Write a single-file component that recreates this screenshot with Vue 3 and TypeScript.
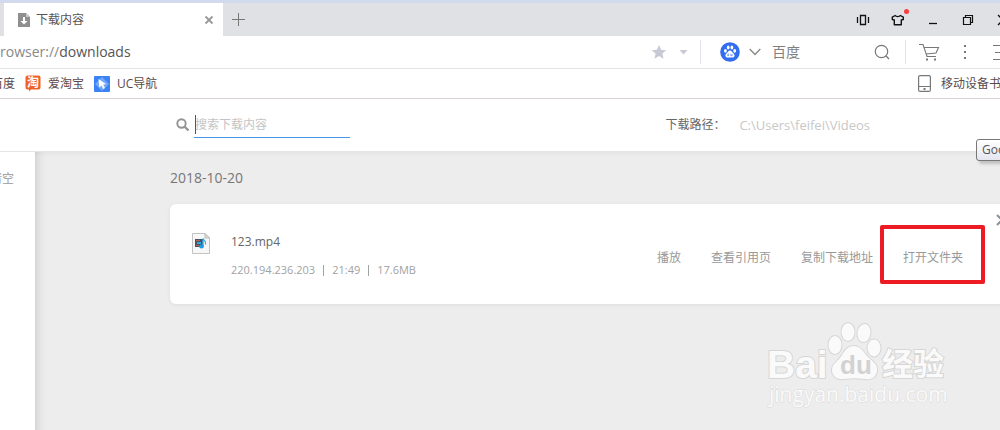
<script setup lang="ts">
import { ref } from 'vue'

interface DownloadItem {
  name: string
  host: string
  time: string
  size: string
}

const query = ref('')
const engineQuery = ref('')
const actions: string[] = ['播放', '查看引用页', '复制下载地址', '打开文件夹']
const highlighted = '打开文件夹'
const downloads: DownloadItem[] = [
  { name: '123.mp4', host: '220.194.236.203', time: '21:49', size: '17.6MB' },
]
</script>

<template>
  <div class="browser">
    <div class="tabbar">
      <div class="tab">
        <svg width="12" height="14" viewBox="0 0 12 14"><path d="M0 0H8L12 4V14H0Z" fill="#8f8f8f" /><path d="M8 0V4H12Z" fill="#c9c9c9" /><path d="M5 4H7V8H9.500L6 11.500L2.500 8H5Z" fill="#fff" /></svg>
        <span class="tab-title">下载内容</span>
        <button class="plain" aria-label="关闭标签页">
          <svg width="10" height="10" viewBox="0 0 10 10"><path d="M1.500 1.500L8.500 8.500M8.500 1.500L1.500 8.500" stroke="#999" stroke-width="1.800" /></svg>
        </button>
      </div>
      <button class="plain new-tab" aria-label="新建标签页">
        <svg width="14" height="14" viewBox="0 0 14 14"><path d="M0 6.500H13M6.500 0V13" stroke="#777" /></svg>
      </button>
      <div class="window-buttons">
        <button class="plain" aria-label="侧栏">
          <svg width="14" height="12" viewBox="0 0 14 12"><path d="M4.500 1.500H9.500V10.500H4.500ZM1.500 3V9M12.500 3V9" fill="none" stroke="#111" stroke-width="1.300" /></svg>
        </button>
        <button class="plain skin" aria-label="皮肤">
          <svg width="14" height="12" viewBox="0 0 14 12"><path d="M4.200 1.500C5 3 8.500 3 9.300 1.500L12.300 3.200V5.500L10.300 6V10.700H3.300V6L1.300 5.500V3.200Z" fill="none" stroke="#111" stroke-width="1.400" stroke-linejoin="round" /></svg>
          <i class="dot"></i>
        </button>
        <button class="plain" aria-label="最小化">
          <svg width="12" height="12" viewBox="0 0 12 12"><path d="M2 9.500H10" stroke="#111" stroke-width="1.300" /></svg>
        </button>
        <button class="plain" aria-label="还原">
          <svg width="12" height="12" viewBox="0 0 12 12"><path d="M1.500 3.500H8.500V10.500H1.500ZM3.500 3.500V1.500H10.500V8.500H8.500" fill="none" stroke="#111" stroke-width="1.200" /></svg>
        </button>
        <button class="plain" aria-label="关闭">
          <svg width="12" height="12" viewBox="0 0 12 12"><path d="M1 1L11 11M11 1L1 11" stroke="#111" stroke-width="1.300" /></svg>
        </button>
      </div>
    </div>

    <div class="address">
      <div class="url" role="textbox" aria-label="地址" contenteditable="true"><span class="scheme">rowser://</span>downloads</div>
      <div class="tools">
        <button class="plain" aria-label="收藏">
          <svg width="16" height="16" viewBox="0 0 16 16"><path d="M8 1L10.100 5.700L15.300 6.200L11.400 9.600L12.500 14.700L8 12L3.500 14.700L4.600 9.600L0.700 6.200L5.900 5.700Z" fill="#c7cad5" /></svg>
        </button>
        <button class="plain caret-button" aria-label="收藏选项">
          <svg width="9" height="5" viewBox="0 0 9 5"><path d="M0.500 0H8.500L4.500 4.500Z" fill="#c7cad5" /></svg>
        </button>
        <i class="divider"></i>
        <button class="plain engine-logo" aria-label="搜索引擎">
          <svg width="20" height="20" viewBox="0 0 20 20"><circle cx="10" cy="10" r="9.800" fill="#326df0" /><g fill="#fff"><ellipse cx="5.400" cy="8.800" rx="1.400" ry="1.900" /><ellipse cx="8.200" cy="5.400" rx="1.400" ry="2" /><ellipse cx="11.900" cy="5.400" rx="1.400" ry="2" /><ellipse cx="14.700" cy="8.800" rx="1.400" ry="1.900" /><path d="M10 8.500C11.500 8.500 12.200 10.200 13.600 11.500C15.800 13.700 14 16 11.500 15.400H8.500C6 16 4.200 13.700 6.400 11.500C7.800 10.200 8.500 8.500 10 8.500Z" /></g><path d="M8.600 11.500V13.700H7.600V12.500M10.800 12V13.700H12.200V12" fill="none" stroke="#326df0" stroke-width=".6" /></svg>
        </button>
        <button class="plain chevron-button" aria-label="切换搜索引擎">
          <svg width="12" height="8" viewBox="0 0 12 8"><path d="M0.700 1L6 6.500L11.300 1" fill="none" stroke="#888" stroke-width="1.300" /></svg>
        </button>
        <input v-model="engineQuery" class="engine-input" type="text" placeholder="百度" aria-label="百度" />
        <button class="plain" aria-label="搜索">
          <svg width="16" height="16" viewBox="0 0 16 16"><circle cx="7.500" cy="7.500" r="6.200" fill="none" stroke="#777" stroke-width="1.200" /><path d="M11.800 11.800L15 15" stroke="#777" stroke-width="1.300" /></svg>
        </button>
        <i class="divider second"></i>
        <button class="plain cart" aria-label="购物车">
          <svg width="21" height="18" viewBox="0 0 21 18"><path d="M0 1.500H4L8 13.500H17M5 4.500H19.500L17 10L7 11" fill="none" stroke="#777" stroke-width="1.100" /><path d="M7 15.500H9V17.500H7ZM15 15.500H17V17.500H15Z" fill="#777" /></svg>
        </button>
        <button class="plain more" aria-label="更多">
          <svg width="4" height="16" viewBox="0 0 4 16"><path d="M1 1H3V3H1ZM1 7H3V9H1ZM1 13H3V15H1Z" fill="#777" /></svg>
        </button>
        <button class="plain menu" aria-label="菜单">
          <svg width="16" height="16" viewBox="0 0 16 16"><path d="M0 1.500H16M2 8.500H16M0 15.500H16" stroke="#777" stroke-width="1.100" /></svg>
        </button>
      </div>
    </div>

    <nav class="bookmarks">
      <a class="first" href="#">百度</a>
      <a href="#">
        <svg width="16" height="17" viewBox="0 0 16 17"><path d="M2.500 0.500H13.500Q15.500 0.500 15.500 2.500V12.500Q15.500 14.500 13.500 14.500H6L4 16.500V14.500H2.500Q0.500 14.500 0.500 12.500V2.500Q0.500 0.500 2.500 0.500Z" fill="#ee622a" /><text x="2" y="12" font-size="12" font-weight="700" fill="#fff">淘</text></svg>
        爱淘宝
      </a>
      <a href="#">
        <svg width="16" height="16" viewBox="0 0 16 16"><rect width="16" height="16" rx="1" fill="#3b83f4" /><path d="M8 1L15 8L8 15L1 8Z" fill="#72a8fa" /><path d="M4.500 3L12 8L9.200 8.700L11 12L9.200 13L7.500 9.600L5.300 11.500Z" fill="#fff" /></svg>
        UC导航
      </a>
      <a class="mobile" href="#">
        <svg width="13" height="17" viewBox="0 0 13 17"><rect x=".6" y=".6" width="11.800" height="15.800" rx="1.500" fill="none" stroke="#777" stroke-width="1.200" /><path d="M1 11.500H12" stroke="#777" /><path d="M5.500 13H7.500V15H5.500Z" fill="#777" /></svg>
        移动设备书签
      </a>
    </nav>

    <header class="page-head">
      <label class="search">
        <svg width="14" height="14" viewBox="0 0 14 14"><circle cx="5.500" cy="5.500" r="4.200" fill="none" stroke="#929292" stroke-width="1.900" /><path d="M8.700 8.700L12.500 12.500" stroke="#929292" stroke-width="2.300" /></svg>
        <span class="field"><input v-model="query" type="text" placeholder="搜索下载内容" aria-label="搜索下载内容" /></span>
      </label>
      <div class="path"><span>下载路径：</span><span class="dir">C:\Users\feifei\Videos</span></div>
      <div class="tooltip" role="tooltip">Goo</div>
    </header>

    <div class="body">
      <aside><button class="plain clear">清空</button></aside>
      <main>
        <h2>2018-10-20</h2>
        <article v-for="item in downloads" :key="item.name" class="card">
          <svg class="file" width="18" height="21" viewBox="0 0 18 21"><path d="M.5 .5H13L17.500 5V20.500H.5Z" fill="#f7f7f7" stroke="#c3c3c3" /><path d="M13 .5V5H17.500Z" fill="#ddd" stroke="#bbb" /><rect x="3" y="6" width="8" height="8" fill="#465564" /><path d="M4 7H8V8H4ZM4 12H7V13H4Z" fill="#b5605e" /><path d="M5 9H9V11H5Z" fill="#38a5dc" /><path d="M11 13V5.500C12 7.500 14.500 8 13.500 11.500" fill="none" stroke="#35a9ec" stroke-width="1.300" /><ellipse cx="9.500" cy="13.500" rx="2.400" ry="1.900" fill="#199bea" /></svg>
          <div class="info">
            <div class="name">{{ item.name }}</div>
            <div class="meta"><span>{{ item.host }}</span><i></i><span>{{ item.time }}</span><i></i><span>{{ item.size }}</span></div>
          </div>
          <div class="actions">
            <button v-for="action in actions" :key="action" class="plain" :class="{ marked: action === highlighted }">{{ action }}</button>
          </div>
          <button class="plain remove" aria-label="删除">
            <svg width="12" height="12" viewBox="0 0 12 12"><path d="M1 1L11 11M11 1L1 11" stroke="#8b929b" stroke-width="2" /></svg>
          </button>
        </article>
        <svg class="watermark" width="190" height="95" viewBox="0 0 190 95" role="img" aria-label="Baidu 经验">
          <g fill="#fafafa" stroke="#d6d6d6" stroke-width="2" paint-order="stroke">
            <text x="4" y="63" class="wm-latin">Bai</text>
            <ellipse cx="72" cy="30" rx="6.500" ry="9" />
            <ellipse cx="85" cy="17" rx="6.500" ry="9" />
            <ellipse cx="101" cy="18" rx="6.500" ry="9" transform="rotate(8 101 18)" />
            <ellipse cx="111" cy="33" rx="6.500" ry="8.500" />
            <path d="M91 31C97 31 101 37 104 41C108 46 115 48 114 56C113 63 108 65 102 64C95 63 88 63 81 64C74 65 69 61 69 55C69 48 76 46 79 40C82 35 85 31 91 31Z" />
            <text x="119" y="60" class="wm-cjk">经验</text>
          </g>
          <text x="77" y="59" class="wm-du">du</text>
          <text x="6" y="87" class="wm-url">jingyan.baidu.com</text>
        </svg>
      </main>
    </div>
  </div>
</template>

<style>
html, body, #app { height: 100%; }
body { margin: 0; }
</style>

<style scoped>
* { box-sizing: border-box; }
.browser { min-height: 100%; display: flex; flex-direction: column; overflow: hidden; background: #fff; color: #5b5252; font: 12px/18px "Open Sans", "Noto Sans CJK SC", sans-serif; border-top: 3px solid #d2daee; }
svg { display: block; flex: none; }
.plain { border: 0; padding: 0; background: none; color: inherit; font: inherit; display: flex; align-items: center; justify-content: center; flex: none; white-space: nowrap; position: relative; }
.tabbar { height: 33px; display: flex; align-items: center; background: #e0e1e5; padding-left: 4px; }
.tab { width: 219px; height: 33px; background: #fff; display: flex; align-items: center; padding: 0 9px 0 14px; }
.tab-title { flex: 1; margin-left: 6px; }
.new-tab { margin-left: 9px; }
.window-buttons { display: flex; margin-left: auto; margin-right: -20px; }
.window-buttons .plain { width: 35px; height: 33px; }
.dot { position: absolute; top: 6px; right: 6px; width: 5px; height: 5px; border-radius: 50%; background: #fc3c3c; }
.address { height: 33px; display: flex; align-items: center; border-bottom: 1px solid #e4e4e8; }
.url { flex: 1; font-size: 14px; line-height: 20px; color: #555; outline: none; white-space: nowrap; }
.scheme { color: #888; }
.tools { display: flex; align-items: center; margin-right: -9px; }
.divider { width: 1px; height: 24px; background: #e2e3ea; margin: 0 19px 0 12px; }
.divider.second { margin: 0 13px 0 15px; }
.caret-button { margin-left: 12px; }
.chevron-button { margin-left: 9px; }
.engine-input { width: 113px; height: 22px; padding: 0 0 2px 11px; border: 0; outline: none; background: none; font: 14px/20px "Open Sans", "Noto Sans CJK SC", sans-serif; }
.engine-input::placeholder { color: #808080; opacity: 1; }
.more { margin-left: 23px; }
.menu { margin-left: 26px; }
.bookmarks { height: 30px; display: flex; align-items: center; gap: 10px; border-bottom: 1px solid #dbd2d5; white-space: nowrap; }
.bookmarks a { display: flex; align-items: center; gap: 7px; color: #5b4a4a; text-decoration: none; }
.bookmarks .first { margin-left: -9px; }
.bookmarks .mobile { margin-left: auto; margin-right: -13px; gap: 10px; }
.page-head { position: relative; height: 53px; display: flex; align-items: center; justify-content: space-between; padding: 0 130px 0 176px; border-bottom: 1px solid #e6e6e6; }
.search { display: flex; align-items: center; gap: 4px; }
.field { position: relative; border-bottom: 1px solid #4a98ee; }
.field::before { content: ""; position: absolute; left: 1px; top: 3px; width: 1px; height: 19px; background: #555; }
.search input { display: block; width: 156px; height: 25px; padding: 0 0 0 1px; border: 0; outline: none; background: none; font: inherit; }
.search input::placeholder { color: #c4c4c4; opacity: 1; }
.path { display: flex; gap: 14px; color: #666; }
.dir { color: #c8c8c8; font-size: 13px; }
.tooltip { position: absolute; z-index: 2; top: 40px; right: -6px; width: 30px; height: 22px; padding: 1px 5px; border: 1px solid #777; border-radius: 3px; background: linear-gradient(#fff, #e5e5f1); box-shadow: 3px 3px 3px #9998; color: #555; }
.body { flex: 1; display: flex; }
aside { width: 35px; background: #fff; padding-top: 18px; }
.clear { margin-left: -10px; color: #999; }
main { position: relative; flex: 1; padding: 16px 0 126px 135px; background: #ededed; box-shadow: inset 12px 0 12px -12px #0003, inset 0 6px 6px -6px #0001; }
h2 { margin: 0; font-size: 14px; line-height: 20px; font-weight: 400; color: #777; }
.card { position: relative; height: 100px; margin: 16px -16px 0 0; padding: 0 53px 0 22px; display: flex; border-radius: 6px; background: #fff; box-shadow: 0 1px 4px #0001; }
.file { margin-top: 29px; }
.info { flex: 1; margin: 29px 0 0 21px; }
.name { color: #666; }
.meta { display: flex; align-items: center; margin-top: 10px; font-size: 11px; color: #a2a2a2; }
.meta i { width: 1px; height: 11px; margin: 0 8px; background: #a2a2a2; }
.actions { display: flex; align-items: center; gap: 30px; color: #999; padding-top: 8px; }
.marked::after { content: ""; position: absolute; inset: -24px -22px -17px -23px; border: 4px solid #ed1c24; border-radius: 2px; }
.actions .plain { height: 18px; }
.remove { position: absolute; right: 8px; top: 10px; }
.watermark { position: absolute; right: 47px; bottom: 20px; }
.wm-latin { font: bold 39px "Liberation Sans", sans-serif; }
.wm-cjk { font: bold 31px "Noto Sans CJK SC", sans-serif; }
.wm-du { font: bold 26px "Liberation Sans", sans-serif; fill: #d2d2d2; }
.wm-url { font: 21px "Open Sans", sans-serif; fill: #fafafa; stroke: #dadada; stroke-width: 1px; paint-order: stroke; }
.bookmarks text { font-family: "Noto Sans CJK SC", sans-serif; }
</style>
